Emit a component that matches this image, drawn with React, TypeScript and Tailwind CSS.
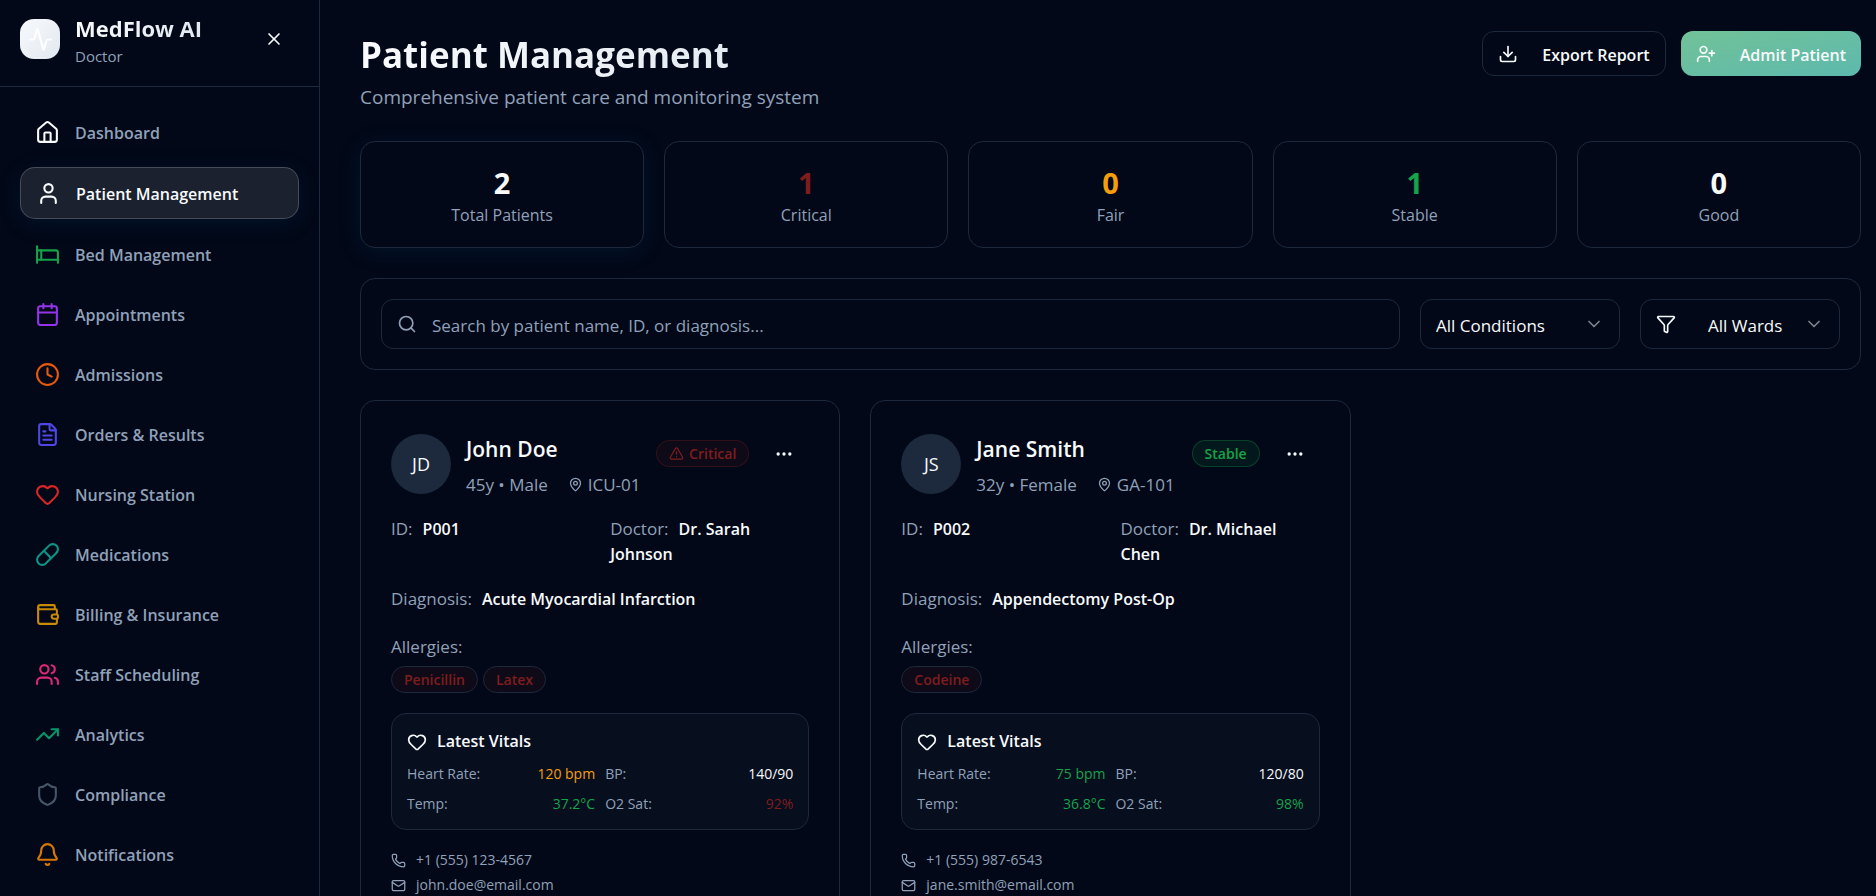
import type { ReactNode } from "react";
import {
  Activity,
  Bed,
  Bell,
  Calendar,
  ChevronDown,
  Clock,
  Download,
  Ellipsis,
  FileText,
  Funnel,
  Heart,
  House,
  Mail,
  MapPin,
  Phone,
  Pill,
  Search,
  Shield,
  TrendingUp,
  TriangleAlert,
  User,
  UserPlus,
  Users,
  Wallet,
  X,
  type LucideIcon,
} from "lucide-react";

type NavItem = { label: string; icon: LucideIcon; color: string; active?: boolean };

const navItems: NavItem[] = [
  { label: "Dashboard", icon: House, color: "text-slate-50" },
  { label: "Patient Management", icon: User, color: "text-slate-50", active: true },
  { label: "Bed Management", icon: Bed, color: "text-[#16a34a]" },
  { label: "Appointments", icon: Calendar, color: "text-[#9333ea]" },
  { label: "Admissions", icon: Clock, color: "text-[#ea580c]" },
  { label: "Orders & Results", icon: FileText, color: "text-[#4f46e5]" },
  { label: "Nursing Station", icon: Heart, color: "text-[#dc2626]" },
  { label: "Medications", icon: Pill, color: "text-[#0d9488]" },
  { label: "Billing & Insurance", icon: Wallet, color: "text-[#ca8a04]" },
  { label: "Staff Scheduling", icon: Users, color: "text-[#db2777]" },
  { label: "Analytics", icon: TrendingUp, color: "text-[#059669]" },
  { label: "Compliance", icon: Shield, color: "text-[#475569]" },
  { label: "Notifications", icon: Bell, color: "text-[#d97706]" },
];

const stats = [
  { value: 2, label: "Total Patients", color: "text-slate-50", glow: true },
  { value: 1, label: "Critical", color: "text-[#7f1d1d]" },
  { value: 0, label: "Fair", color: "text-[#f59e0b]" },
  { value: 1, label: "Stable", color: "text-[#16a34a]" },
  { value: 0, label: "Good", color: "text-slate-50" },
];

type Patient = {
  initials: string;
  name: string;
  info: string;
  room: string;
  critical: boolean;
  id: string;
  doctor: string;
  diagnosis: string;
  allergies: string[];
  vitals: { label: string; value: string; color: string }[];
  phone: string;
  email: string;
};

const patients: Patient[] = [
  {
    initials: "JD",
    name: "John Doe",
    info: "45y • Male",
    room: "ICU-01",
    critical: true,
    id: "P001",
    doctor: "Dr. Sarah Johnson",
    diagnosis: "Acute Myocardial Infarction",
    allergies: ["Penicillin", "Latex"],
    vitals: [
      { label: "Heart Rate:", value: "120 bpm", color: "text-[#f59e0b]" },
      { label: "BP:", value: "140/90", color: "text-slate-50" },
      { label: "Temp:", value: "37.2°C", color: "text-[#16a34a]" },
      { label: "O2 Sat:", value: "92%", color: "text-[#7f1d1d]" },
    ],
    phone: "+1 (555) 123-4567",
    email: "john.doe@email.com",
  },
  {
    initials: "JS",
    name: "Jane Smith",
    info: "32y • Female",
    room: "GA-101",
    critical: false,
    id: "P002",
    doctor: "Dr. Michael Chen",
    diagnosis: "Appendectomy Post-Op",
    allergies: ["Codeine"],
    vitals: [
      { label: "Heart Rate:", value: "75 bpm", color: "text-[#16a34a]" },
      { label: "BP:", value: "120/80", color: "text-slate-50" },
      { label: "Temp:", value: "36.8°C", color: "text-[#16a34a]" },
      { label: "O2 Sat:", value: "98%", color: "text-[#16a34a]" },
    ],
    phone: "+1 (555) 987-6543",
    email: "jane.smith@email.com",
  },
];

function Sidebar() {
  return (
    <aside className="flex w-80 shrink-0 flex-col border-r border-slate-800">
      <div className="flex h-[87px] shrink-0 items-center justify-between border-b border-slate-800 pr-5 pb-2 pl-5">
        <div className="flex items-center gap-[15px]">
          <div className="flex size-10 items-center justify-center rounded-[14px] bg-gradient-to-br from-slate-50 to-slate-200">
            <Activity size={25} className="text-white" />
          </div>
          <div className="pt-[3px]">
            <div className="bg-gradient-to-r from-slate-50 to-slate-200 bg-clip-text text-[22px] leading-[31px] font-bold text-transparent">
              MedFlow AI
            </div>
            <div className="text-[15px] leading-6 text-slate-400">Doctor</div>
          </div>
        </div>
        <button type="button" aria-label="Close menu" className="flex size-[50px] items-center justify-center text-slate-50">
          <X size={20} />
        </button>
      </div>
      <nav className="flex flex-col gap-2.5 overflow-hidden p-5">
        {navItems.map(({ label, icon: Icon, color, active }) => (
          <a
            key={label}
            href="#"
            className={
              active
                ? "flex h-[52px] shrink-0 items-center gap-[15px] rounded-[15px] border border-white/20 bg-white/10 px-[15px] text-base font-semibold text-slate-50 shadow-[0_4px_24px_rgba(14,100,180,0.13)]"
                : "flex h-[50px] shrink-0 items-center gap-[15px] rounded-[15px] px-[15px] text-base font-semibold text-slate-400"
            }
          >
            <Icon size={25} className={color} />
            <span className="pt-0.5">{label}</span>
          </a>
        ))}
      </nav>
    </aside>
  );
}

function PageHeader() {
  return (
    <header className="flex items-start justify-between">
      <div>
        <h1 className="bg-gradient-to-r from-slate-50 to-slate-200 bg-clip-text text-[35px] leading-[48px] font-bold text-transparent">
          Patient Management
        </h1>
        <p className="mt-1 text-[19px] leading-7 text-slate-400">
          Comprehensive patient care and monitoring system
        </p>
      </div>
      <div className="flex gap-[15px]">
        <button
          type="button"
          className="flex h-[45px] items-center gap-6 rounded-xl border border-slate-800 px-[15px] text-base font-semibold text-slate-50"
        >
          <Download size={20} />
          <span className="pt-0.5">Export Report</span>
        </button>
        <button
          type="button"
          className="flex h-[45px] items-center gap-6 rounded-xl bg-gradient-to-br from-[#72c297] to-[#5db9ae] px-[15px] text-base font-semibold text-slate-50"
        >
          <UserPlus size={20} />
          <span className="pt-0.5">Admit Patient</span>
        </button>
      </div>
    </header>
  );
}

function StatCard({ value, label, color, glow }: (typeof stats)[number]) {
  return (
    <div
      className={
        glow
          ? "rounded-[15px] border border-slate-800 bg-[#020817] pt-[21px] pb-[19px] text-center shadow-[0_4px_24px_rgba(14,100,180,0.13)]"
          : "rounded-[15px] border border-slate-800 pt-[21px] pb-[19px] text-center"
      }
    >
      <div className={`text-[29px] leading-10 font-bold ${color}`}>{value}</div>
      <div className="text-base leading-[25px] text-slate-400">{label}</div>
    </div>
  );
}

function FilterSelect({ label, options, icon }: { label: string; options: string[]; icon?: ReactNode }) {
  return (
    <label className="flex h-[50px] w-[200px] items-center rounded-xl border border-slate-800 px-[15px]">
      {icon}
      <select
        aria-label={label}
        className={
          icon
            ? "min-w-0 flex-1 appearance-none bg-transparent pt-[3px] pl-8 text-[17px] text-slate-50 outline-none"
            : "min-w-0 flex-1 appearance-none bg-transparent pt-[3px] text-[17px] text-slate-50 outline-none"
        }
      >
        {options.map((o) => (
          <option key={o}>{o}</option>
        ))}
      </select>
      <ChevronDown size={20} className="pointer-events-none shrink-0 text-slate-50 opacity-50" />
    </label>
  );
}

function Filters() {
  return (
    <div className="flex gap-5 rounded-[15px] border border-slate-800 p-5">
      <label className="flex h-[50px] flex-1 items-center gap-[15px] rounded-xl border border-slate-800 px-[15px]">
        <Search size={20} className="shrink-0 text-slate-400" />
        <input
          type="text"
          aria-label="Search patients"
          placeholder="Search by patient name, ID, or diagnosis..."
          className="min-w-0 flex-1 bg-transparent pt-[3px] text-[17px] text-slate-50 outline-none placeholder:text-slate-400"
        />
      </label>
      <FilterSelect label="Condition" options={["All Conditions", "Critical", "Fair", "Stable", "Good"]} />
      <FilterSelect
        label="Ward"
        options={["All Wards", "ICU", "General"]}
        icon={<Funnel size={20} className="shrink-0 text-slate-50" />}
      />
    </div>
  );
}

function StatusBadge({ critical }: { critical: boolean }) {
  return critical ? (
    <span className="flex h-[27px] items-center gap-[5px] rounded-full border border-[#7f1d1d]/30 bg-[#7f1d1d]/10 px-3 text-sm font-semibold text-[#7f1d1d]">
      <TriangleAlert size={15} />
      Critical
    </span>
  ) : (
    <span className="flex h-[27px] items-center rounded-full border border-[#16a34a]/30 bg-[#16a34a]/10 px-3 text-sm font-semibold text-[#16a34a]">
      Stable
    </span>
  );
}

function Field({ label, value }: { label: string; value: string }) {
  return (
    <p className="text-base leading-[25px] font-semibold text-slate-50">
      <span className="mr-2.5 text-[17px] leading-none font-normal text-slate-400">{label}</span>
      {value}
    </p>
  );
}

function PatientCard({ patient }: { patient: Patient }) {
  return (
    <article className="rounded-[15px] border border-slate-800 p-[30px] text-[17px] leading-[25px]">
      <div className="flex items-start justify-between">
        <div className="flex items-center gap-[15px]">
          <div className="flex size-[60px] items-center justify-center rounded-full bg-slate-800 text-lg font-medium text-slate-50">
            {patient.initials}
          </div>
          <div>
            <h2 className="text-[21px] leading-[37px] font-semibold text-slate-50">{patient.name}</h2>
            <div className="flex items-center gap-5 pt-1 text-slate-400">
              <span>{patient.info}</span>
              <span className="flex items-center gap-[5px]">
                <MapPin size={15} />
                {patient.room}
              </span>
            </div>
          </div>
        </div>
        <div className="flex items-center gap-2.5">
          <StatusBadge critical={patient.critical} />
          <button
            type="button"
            aria-label={`Actions for ${patient.name}`}
            className="flex h-[45px] w-[50px] items-center justify-center text-slate-50"
          >
            <Ellipsis size={20} />
          </button>
        </div>
      </div>

      <div className="mt-5 grid grid-cols-2 gap-5">
        <Field label="ID:" value={patient.id} />
        <Field label="Doctor:" value={patient.doctor} />
      </div>

      <div className="mt-5">
        <Field label="Diagnosis:" value={patient.diagnosis} />
      </div>

      <div className="mt-[22px]">
        <div className="text-slate-400">Allergies:</div>
        <div className="mt-[7px] flex gap-[5px]">
          {patient.allergies.map((a) => (
            <span
              key={a}
              className="flex h-[27px] items-center rounded-full border border-slate-800 bg-[#7f1d1d]/10 px-3 text-sm font-semibold text-[#7f1d1d]"
            >
              {a}
            </span>
          ))}
        </div>
      </div>

      <section className="mt-5 rounded-[15px] border border-slate-800 bg-slate-800/20 p-[15px]">
        <h3 className="flex items-center gap-2.5 text-base leading-[25px] font-semibold text-slate-50">
          <Heart size={20} />
          Latest Vitals
        </h3>
        <div className="mt-2.5 grid grid-cols-2 gap-2.5 text-sm leading-5">
          {patient.vitals.map((v) => (
            <div key={v.label} className="flex justify-between">
              <span className="text-slate-400">{v.label}</span>
              <span className={v.color}>{v.value}</span>
            </div>
          ))}
        </div>
      </section>

      <div className="mt-5 flex flex-col gap-[5px] text-sm leading-5 text-slate-400">
        <div className="flex items-center gap-2.5">
          <Phone size={15} />
          {patient.phone}
        </div>
        <div className="flex items-center gap-2.5">
          <Mail size={15} />
          {patient.email}
        </div>
      </div>
    </article>
  );
}

export default function App() {
  return (
    <div className="flex h-screen bg-[#020817] font-['Segoe_UI','Open_Sans',sans-serif] text-slate-50">
      <Sidebar />
      <main className="flex min-w-0 flex-1 flex-col gap-[30px] overflow-y-auto pt-[31px] pr-[15px] pb-10 pl-10 [scrollbar-width:none]">
        <PageHeader />
        <div className="grid grid-cols-5 gap-5">
          {stats.map((s) => (
            <StatCard key={s.label} {...s} />
          ))}
        </div>
        <Filters />
        <div className="grid grid-cols-3 gap-[30px]">
          {patients.map((p) => (
            <PatientCard key={p.id} patient={p} />
          ))}
        </div>
      </main>
    </div>
  );
}
